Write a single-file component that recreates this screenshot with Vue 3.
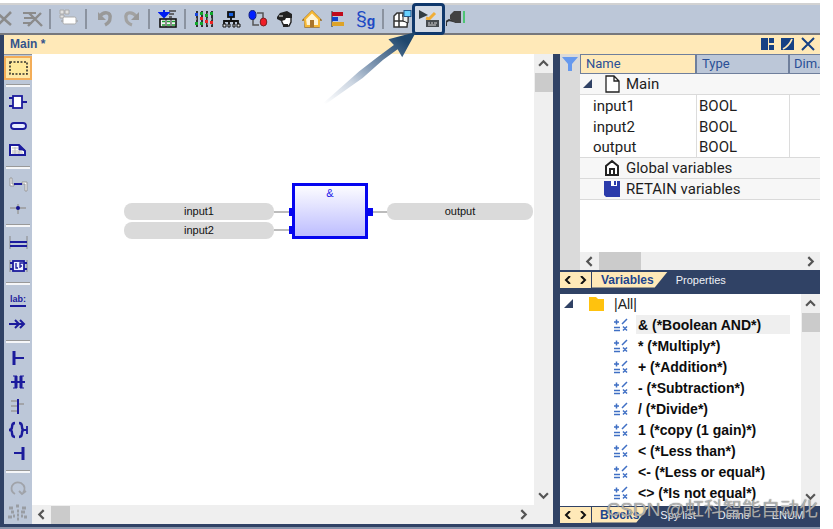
<script setup>
import { ref } from 'vue'

const variables = ref([
  { name: 'input1', type: 'BOOL' },
  { name: 'input2', type: 'BOOL' },
  { name: 'output', type: 'BOOL' },
])

const blocks = [
  '& (*Boolean AND*)',
  '* (*Multiply*)',
  '+ (*Addition*)',
  '- (*Subtraction*)',
  '/ (*Divide*)',
  '1 (*copy (1 gain)*)',
  '< (*Less than*)',
  '<- (*Less or equal*)',
  '<> (*Is not equal*)',
]
const selected = ref(0)
</script>

<template>
  <div class="ide">
    <header class="toolbar">
      <button class="tool" aria-label="Delete"><svg viewBox="0 0 20 20"><path d="M1 4 15 16M15 3 2 16" stroke="#8b8b8b" stroke-width="2.6" fill="none" /></svg></button>
      <button class="tool" aria-label="Clear rows"><svg viewBox="0 0 20 20"><path d="M0 4h13M1 9h11M0 14h9" stroke="#8b8b8b" stroke-width="1.8" /><path d="M6 4 19 17M18 4 5 17" stroke="#8b8b8b" stroke-width="2.4" /></svg></button>
      <i class="sep"></i>
      <button class="tool" aria-label="Insert block"><svg viewBox="0 0 20 20"><path d="M1 1h4v4H1zM6 1h4v4H6zM1 6h4v3H1z" fill="#e2e2e2" stroke="#aaa" /><path d="M2 12h17" stroke="#999" /><rect x="4" y="8" width="13" height="7" rx="1.5" fill="#fff" stroke="#ababab" /></svg></button>
      <i class="sep"></i>
      <button class="tool" aria-label="Undo"><svg viewBox="0 0 20 20"><path d="M5 7C9 2 16 3 15 9c0 4-3 6-5 7" fill="none" stroke="#999" stroke-width="3.400" /><path d="M3 3v8h8z" fill="#999" /></svg></button>
      <button class="tool" aria-label="Redo"><svg viewBox="0 0 20 20"><path d="M14 7C10 2 3 3 4 9c0 4 3 6 6 7" fill="none" stroke="#a2a2a2" stroke-width="3.200" /><path d="M17 3v8H9z" fill="#999" /></svg></button>
      <i class="sep"></i>
      <button class="tool" aria-label="Download"><svg viewBox="0 0 20 20"><path d="M6 1v6M2 4l4 4 4-4z" stroke="#001df0" stroke-width="2" fill="#001df0" /><path d="M11 2h7M11 5h5M11 8h3" stroke="#444" stroke-width="1.4" /><rect x="2" y="10" width="16" height="8" fill="#f4f4f4" stroke="#111" stroke-width="1.6" /><path d="M4 12.500h3M9 12.500h3M14 12.500h3M4 16h3M9 16h3M14 16h3" stroke="#1b9f2d" stroke-width="1.4" /><path d="M8 10v8M13 10v8" stroke="#222" /></svg></button>
      <i class="sep"></i>
      <button class="tool" aria-label="Monitoring"><svg viewBox="0 0 20 20"><path d="M3 2v16M8 2v16M13 2v16M18 2v16" stroke="#222" stroke-width="1.800" /><path d="M1 5h17M1 10h17M1 15h17" stroke="#bbb" stroke-dasharray="2 2" /><path d="M1 4h3v3H1z" fill="#1745df" /><path d="M6 3h3v3H6zM11 5h3v3h-3zM16 3h3v3h-3zM1 13h3v3H1zM6 13h3v3H6z" fill="#10a82b" /><path d="M6 8h3v3H6zM11 11h3v3h-3zM16 12h3v3h-3z" fill="#ec2424" /></svg></button>
      <button class="tool" aria-label="Network"><svg viewBox="0 0 20 20"><rect x="7" y="3" width="6" height="5" fill="#155fe2" stroke="#111" stroke-width="1.800" /><path d="M10 8v4M3 15v-3h14v3M8 12v3M13 12v3" fill="none" stroke="#111" stroke-width="1.800" /><path d="M2 15h3v3H2zM7 15h2v3H7zM12 15h2v3h-2zM16 15h3v3h-3z" fill="#ddd" stroke="#111" /></svg></button>
      <button class="tool" aria-label="Binding"><svg viewBox="0 0 20 20"><path d="M5 8v8h6M9 4h6v9" fill="none" stroke="#555" stroke-width="1.5" /><ellipse cx="4.500" cy="6" rx="3.500" ry="4.500" fill="#001eff" stroke="#102080" /><ellipse cx="15.500" cy="13" rx="3.300" ry="4" fill="#f01d27" stroke="#7b2020" /></svg></button>
      <button class="tool" aria-label="User"><svg viewBox="0 0 20 20"><path d="M6 8h10v5l-2 4H9l-2-4z" fill="#fff" stroke="#222" stroke-width="1.4" /><path d="M2 8 5 4l7-2 5 3v4h-6l-1 2-4 1-4-2zM8 15h5v3H8z" fill="#222" /><path d="M4 7h4M13 12h2" stroke="#eee" /></svg></button>
      <button class="tool" aria-label="Home"><svg viewBox="0 0 20 20"><path d="M1 11 10 2l9 9h-2v7H3v-7z" fill="#f7b733" stroke="#9a6c20" stroke-width="1.3" /><path d="m3 10 7-7 7 7v7H4z" fill="#fff4d5" stroke="#f6b936" stroke-width="2" /><path d="M8 11h4v7H8z" fill="#a9742a" /></svg></button>
      <button class="tool" aria-label="Chart"><svg viewBox="0 0 20 20"><path d="M3 2v16" stroke="#222" /><path d="M3 3h11v4H3z" fill="#c00b1b" /><path d="M3 8h6v4H3z" fill="#1245c9" /><path d="M3 13h12v4H3z" fill="#dda328" /></svg></button>
      <button class="tool paragraph" aria-label="Strings">§<b>g</b></button>
      <i class="sep"></i>
      <button class="tool" aria-label="Project grid"><svg viewBox="0 0 20 20"><path d="M2 7l3-3h6v3h5l-1 11H2zM2 12h13M7 4v14" fill="#fff" stroke="#333" stroke-width="1.500" /><path d="M11 6v6l5 2V8" fill="#eee" stroke="#222" /><rect x="12" y="1.500" width="7" height="6" fill="#68d1ff" stroke="#225588" /></svg></button>
      <button class="tool active" aria-label="Start simulation"><svg viewBox="0 0 20 20"><path d="m0 1 9 5-9 4z" fill="#333d42" /><path d="m7 9 3 1 6-6" fill="none" stroke="#f0ae37" stroke-width="3" /><path d="M7 11h13v7H7z" fill="#464b50" /><path d="M9 14h2M12 14h2M15 14h3M9 16h8" stroke="#d5d5d5" /></svg></button>
      <button class="tool" aria-label="Connect"><svg viewBox="0 0 20 20"><path d="M0 17v-4l3-2 4 1V9" fill="none" stroke="#333" stroke-width="2" /><path d="M4 6 8 2h7v12H9l-5-4z" fill="#424242" /><path d="M18 2v12" stroke="#2ac553" stroke-width="1.5" /></svg></button>
    </header>

    <div class="titlebar">
      <strong>Main *</strong>
      <span class="window-actions">
        <button aria-label="Tile"><svg viewBox="0 0 14 14"><path d="M0 1h7v12H0zM8 1h5v5H8zM8 8h5v5H8z" /></svg></button>
        <button aria-label="Restore"><svg viewBox="0 0 14 14"><path d="M0 1h13v12H0z" /><path d="M2 12Q8 9 11 2" stroke="#ffe9b8" stroke-width="1.800" fill="none" /></svg></button>
        <button aria-label="Close"><svg viewBox="0 0 14 14"><path d="m1 1 12 12M13 1 1 13" stroke="#164184" stroke-width="2" /></svg></button>
      </span>
    </div>

    <main class="workspace">
      <nav class="toolbox">
        <button class="chosen" aria-label="Select"><svg viewBox="0 0 22 20"><rect x="3" y="4" width="17" height="12" fill="#ffe99b" stroke="#33332d" stroke-width="1.6" stroke-dasharray="2 1.500" /></svg></button>
        <hr>
        <button aria-label="Block"><svg viewBox="0 0 22 20"><path d="M2 6h5M2 14h5M15 10h5" stroke-width="2" /><rect x="6" y="4" width="9" height="12" fill="#fff" stroke-width="1.800" /></svg></button>
        <button aria-label="Variable"><svg viewBox="0 0 22 20"><rect x="4" y="7" width="15" height="6" rx="3" fill="#e8edff" stroke-width="1.800" /></svg></button>
        <button aria-label="Comment"><svg viewBox="0 0 22 20"><path d="M3 5h9l6 6v4H3z" fill="#fff" stroke-width="2" /><path d="M12 5v5h6" fill="#1e1ea0" /><path d="M5 8h6M5 11h10M5 13h11M8 7v7M12 11v3" stroke="#bbb" stroke-width="1" /></svg></button>
        <hr>
        <button aria-label="Connection"><svg viewBox="0 0 22 20"><path d="M3 4v8h4v-2H5V4zM15 8v2h3v7h2V8z" fill="#fff" stroke="#999" stroke-width="1" /><path d="M7 10h8" stroke-width="2" /></svg></button>
        <button aria-label="Corner"><svg viewBox="0 0 22 20"><path d="M3 10h16M11 6v10" stroke="#999" stroke-width="1.4" /><circle cx="11" cy="10" r="2" fill="#151590" stroke="none" /></svg></button>
        <hr>
        <button aria-label="Rail"><svg viewBox="0 0 22 20"><path d="M3 4v13M20 4v13" stroke="#888" /><path d="M3 10h17M3 14h17" stroke-width="2" /></svg></button>
        <button aria-label="Function"><svg viewBox="0 0 22 20"><path d="M3 4v12M20 4v12" stroke="#888" /><path d="M3 7h3M3 13h3M17 7h3M17 13h3" stroke-width="2" /><rect x="6" y="5" width="11" height="10" fill="#edf0ff" stroke-width="1.800" /><path d="M9 7v5h2M13 12V7h3M13 10h2" stroke-width="1.300" /></svg></button>
        <hr>
        <button class="label-tool" aria-label="Label">lab:</button>
        <button aria-label="Jump"><svg viewBox="0 0 22 20"><path d="M2 10h15M8 6l4 4-4 4M13 6l4 4-4 4" stroke-width="2" /></svg></button>
        <hr>
        <button aria-label="Left rail"><svg viewBox="0 0 22 20"><path d="M7 3v14" stroke-width="3" /><path d="M7 10h10" stroke-width="2" /></svg></button>
        <button aria-label="Contact"><svg viewBox="0 0 22 20"><path d="M4 10h14" stroke-width="2" /><path d="M9 4v12M14 4v12" stroke-width="3" /><path d="M6 4h4M6 16h4M13 4h4M13 16h4" /></svg></button>
        <button aria-label="Branch"><svg viewBox="0 0 22 20"><path d="M4 5h6M4 10h6M4 15h6M11 8h6" stroke="#999" stroke-width="1.500" /><path d="M11 3v15" stroke-width="2" /></svg></button>
        <button aria-label="Coil"><svg viewBox="0 0 22 20"><path d="M8 3Q5 3 5 7q0 3-3 3 3 0 3 3 0 4 3 4M12 3q3 0 3 4 0 3 2 3-2 0-2 3 0 4-3 4" stroke-width="2.400" /><path d="M15 10h5M20 6v8" stroke-width="1.800" /></svg></button>
        <button aria-label="Right rail"><svg viewBox="0 0 22 20"><path d="M16 3v13" stroke-width="3" /><path d="M7 9h8" stroke-width="2" /></svg></button>
        <hr>
        <button aria-label="Rotate"><svg viewBox="0 0 22 20"><path d="M8 16Q3 13 5 8q3-5 9-3 6 4 2 10M12 13l3 3 4-3" stroke="#a0a3a9" stroke-width="1.800" /></svg></button>
        <button aria-label="Align"><svg viewBox="0 0 22 20"><path d="M2 6h4M9 4h3M15 6h4M4 10h3M10 9h2M14 10h4M1 15h4M6 14h2M10 13h2M10 17h2M14 14h2M17 15h3" stroke="#999da3" stroke-width="3" /></svg></button>
      </nav>

      <section class="editor" aria-label="Function block diagram">
        <div class="canvas">
          <i class="wire wire-a"></i><i class="wire wire-b"></i><i class="wire wire-c"></i>
          <div class="pin pin-a">input1</div>
          <div class="pin pin-b">input2</div>
          <div class="block">&amp;</div>
          <i class="port port-a"></i><i class="port port-b"></i><i class="port port-c"></i>
          <div class="pin pin-out">output</div>
        </div>
        <div class="vscroll">
          <svg viewBox="0 0 10 10"><path d="m1 7 4-4 4 4" /></svg>
          <i class="thumb"></i>
          <svg class="end" viewBox="0 0 10 10"><path d="m1 3 4 4 4-4" /></svg>
        </div>
        <div class="hscroll editor-h">
          <svg viewBox="0 0 10 10"><path d="M7 1 3 5l4 4" /></svg>
          <i class="thumb"></i>
          <svg class="end" viewBox="0 0 10 10"><path d="m3 1 4 4-4 4" /></svg>
        </div>
      </section>

      <aside class="side">
        <section class="variables">
          <div class="filter"><svg viewBox="0 0 16 16"><path d="M0 1h16l-6 7v7H6V8z" fill="#6699ee" /></svg></div>
          <div class="variables-body">
            <table>
              <colgroup><col class="c-name"><col class="c-type"><col></colgroup>
              <thead><tr><th>Name</th><th>Type</th><th>Dim.</th></tr></thead>
              <tbody>
                <tr class="group"><td colspan="3"><span class="cell"><svg class="arrow" viewBox="0 0 10 10"><path d="M9 0v9H0z" /></svg><svg class="glyph" viewBox="0 0 18 18"><path d="M3 1h8l5 5v11H3zM11 1v5h5" fill="#fff" stroke="#222" stroke-width="1.300" /></svg>Main</span></td></tr>
                <tr v-for="v in variables" :key="v.name" class="item"><td class="var">{{ v.name }}</td><td>{{ v.type }}</td><td></td></tr>
                <tr class="group"><td colspan="3"><span class="cell"><i class="arrow"></i><svg class="glyph" viewBox="0 0 18 18"><path d="M3 16V7l6-5 6 5v9zM7 16v-6h4v6" fill="#fff" stroke="#222" stroke-width="2" /></svg>Global variables</span></td></tr>
                <tr class="group"><td colspan="3"><span class="cell"><i class="arrow"></i><svg class="glyph" viewBox="0 0 18 18"><path d="M1 1h16v16H3l-2-2z" fill="#2b3bab" /><path d="M8 1h6v5H8z" fill="#fff" /><path d="M11 1h2v4h-2z" fill="#2b3bab" /></svg>RETAIN variables</span></td></tr>
              </tbody>
            </table>
            <div class="hscroll vars-h">
              <svg viewBox="0 0 10 10"><path d="M7 1 3 5l4 4" /></svg>
              <i class="thumb"></i>
              <svg class="end" viewBox="0 0 10 10"><path d="m3 1 4 4-4 4" /></svg>
            </div>
          </div>
        </section>

        <nav class="tabs">
          <span class="pager"><button aria-label="Previous tab"><svg viewBox="0 0 8 8"><path d="M6 0 2 4l4 4" /></svg></button><button aria-label="Next tab"><svg viewBox="0 0 8 8"><path d="m2 0 4 4-4 4" /></svg></button></span>
          <button class="tab current">Variables</button>
          <button class="tab">Properties</button>
        </nav>

        <section class="library">
          <div class="tree">
            <div class="root"><svg class="arrow" viewBox="0 0 10 10"><path d="M9 0v9H0z" /></svg><svg class="folder" viewBox="0 0 16 14"><path d="M1 0h7l2 2h6v12H1z" fill="#ffc20e" /></svg>|All|</div>
            <ul>
              <li v-for="(b, i) in blocks" :key="b">
                <svg viewBox="0 0 16 14"><path d="M1 4h5M3.500 1.500v5M1 9.500h6M1 12.500h6M9 6l5-5M10 8.500l4 4M14 8.500l-4 4" fill="none" stroke="#3f6fc4" stroke-width="1.500" /></svg>
                <button :class="{ picked: i === selected }" @click="selected = i">{{ b }}</button>
              </li>
            </ul>
          </div>
          <div class="vscroll">
            <svg viewBox="0 0 10 10"><path d="m1 7 4-4 4 4" /></svg>
            <i class="thumb"></i>
            <svg class="end" viewBox="0 0 10 10"><path d="m1 3 4 4 4-4" /></svg>
          </div>
        </section>

        <nav class="tabs lower">
          <span class="pager"><button aria-label="Previous tab"><svg viewBox="0 0 8 8"><path d="M6 0 2 4l4 4" /></svg></button><button aria-label="Next tab"><svg viewBox="0 0 8 8"><path d="m2 0 4 4-4 4" /></svg></button></span>
          <button class="tab current">Blocks</button>
          <button class="tab">Spy list</button>
          <button class="tab">Define</button>
          <button class="tab">ENUM</button>
        </nav>
        <div class="watermark">CSDN @虹科智能自动化</div>
      </aside>
    </main>
    <footer></footer>
  </div>
</template>

<style>
body { margin: 0; background: #fff; overflow: hidden; }
</style>

<style scoped>
* { box-sizing: border-box; }
button { border: 0; padding: 0; margin: 0; background: none; font: inherit; color: inherit; }
svg { display: block; flex: none; }

.ide {
  display: flex;
  flex-direction: column;
  height: 100vh;
  padding: 3px 13px 0 0;
  font-family: "Liberation Sans", "Noto Sans CJK SC", sans-serif;
}

.toolbar {
  display: flex;
  align-items: center;
  flex: none;
  height: 32px;
  padding-right: 8px;
  background: #bcc7d8;
  border-top: 2px solid #d2d2d2;
  border-bottom: 2px solid #77787c;
}
.tool { flex: none; width: 27px; height: 28px; display: grid; place-items: center; }
.tool:first-child { margin-left: -8px; }
.tool svg { width: 20px; height: 20px; }
.toolbar .sep { flex: none; width: 2px; height: 20px; margin: 0 4px 0 3px; background: #8b93a0; }
.active { outline: 3px solid #10386c; outline-offset: -1px; border-radius: 2px; background: #d3dae5; width: 29px; margin: 0 -1px; }
.tool.paragraph { display: flex; align-items: center; justify-content: center; color: #1c4ac4; font-size: 20px; line-height: 24px; }
.paragraph b { font-size: 14px; padding-top: 4px; }

.titlebar {
  display: flex;
  align-items: center;
  justify-content: space-between;
  flex: none;
  height: 19px;
  padding: 0 5px 2px 6px;
  border-left: 4px solid #304265;
  background: #ffe9b8;
}
.titlebar strong { font-size: 12px; line-height: 16px; color: #34548c; }
.window-actions { display: flex; gap: 6px; }
.window-actions svg { width: 14px; height: 14px; fill: #164184; }

.workspace { display: flex; flex: 1; min-height: 0; border-left: 4px solid #304265; }
footer { flex: none; height: 5px; background: #304265; border-bottom: 2px solid #8793aa; }

.toolbox {
  display: flex;
  flex-direction: column;
  justify-content: space-between;
  flex: none;
  width: 28px;
  padding-top: 1px;
  background: #bcc7d8;
  border-top: 1px solid #8a8f9a;
  overflow: hidden;
}
.toolbox button { flex: none; height: 24px; display: grid; place-items: center; }
.toolbox svg { width: 22px; height: 20px; fill: none; stroke: #1b1b9c; }
.toolbox hr { flex: none; width: 24px; height: 3px; margin: 4px auto 3px; border: 0; border-top: 1px solid #999; border-bottom: 2px solid #f5f6f8; }
.toolbox .chosen { background: #ffe8a6; border: 2px solid #f3ad58; }
.toolbox .label-tool { place-self: center; height: 14px; margin: 5px 0; font-size: 9px; line-height: 11px; font-weight: bold; color: #1b1b9c; border-bottom: 2px solid #1b1b9c; }

.editor { flex: 1; min-width: 0; display: grid; grid-template-columns: 1fr 19px; grid-template-rows: 1fr 19px; }
.canvas { position: relative; overflow: hidden; background: #fff; }
.pin { position: absolute; width: 150px; height: 17px; border-radius: 8px; background: #dadada; font-size: 11px; line-height: 16px; text-align: center; color: #111; }
.pin-a { left: 92px; top: 149px; }
.pin-b { left: 92px; top: 168px; }
.pin-out { left: 355px; top: 149px; width: 146px; }
.block { position: absolute; left: 260px; top: 129px; width: 76px; height: 56px; border: 3px solid #0505ef; background: linear-gradient(#fcfcff, #bdbdff); font-size: 11px; line-height: 14px; text-align: center; color: #2020e8; }
.wire { position: absolute; height: 2px; background: #bcbcbc; }
.wire-a { left: 242px; top: 157px; width: 16px; }
.wire-b { left: 242px; top: 175px; width: 16px; }
.wire-c { left: 340px; top: 157px; width: 16px; }
.port { position: absolute; width: 6px; height: 8px; background: #0505ef; }
.port-a { left: 257px; top: 154px; }
.port-b { left: 257px; top: 172px; }
.port-c { left: 335px; top: 154px; }

.vscroll, .hscroll { display: flex; align-items: center; background: #efefef; }
.vscroll { flex-direction: column; }
.vscroll svg, .hscroll svg { width: 11px; height: 11px; margin: 4px; fill: none; stroke: #555; stroke-width: 2; }
.thumb { background: #cbcbcb; }
.vscroll .thumb { width: 18px; height: 19px; }
.vscroll .end { margin-top: auto; }
.hscroll .thumb { height: 18px; width: 19px; }
.hscroll .end { margin-left: auto; }
.editor-h { grid-column: 1 / 3; padding-right: 20px; }

.side { position: relative; display: flex; flex-direction: column; flex: none; width: 267px; min-width: 0; border-left: 7px solid #304265; background: #304265; }
.variables { display: flex; flex: none; height: 216px; background: #fff; }
.filter { flex: none; width: 20px; padding: 2px; background: #dadada; }
.filter svg { width: 16px; height: 16px; }
.variables-body { flex: 1; min-width: 0; display: flex; flex-direction: column; }
table { width: 100%; table-layout: fixed; border-collapse: separate; border-spacing: 0; font-family: Roboto, sans-serif; font-size: 15px; color: #1d1d1d; }
.c-name { width: 117px; }
.c-type { width: 93px; }
th { height: 20px; padding: 0 0 0 5px; border: 1px solid #6f7f9c; border-width: 1px 2px 1px 0; background: #bcc7d8; text-align: left; font-weight: normal; font-size: 13px; line-height: 18px; color: #2a4f96; white-space: nowrap; }
th:first-child { background: #ffe9b8; border-left-width: 1px; }
th:last-child { border-right: 0; padding-left: 4px; }
td { height: 21px; padding: 0 0 0 2px; border-right: 1px solid #dcdcdc; line-height: 20px; white-space: nowrap; }
td:last-child { border-right: 0; }
td.var { padding-left: 13px; }
.item:nth-child(4) td { border-bottom: 1px solid #dadada; }
.group td { background: #f7f7f7; border-bottom: 1px solid #dadada; border-right: 0; }
.cell { display: flex; align-items: center; height: 20px; }
.arrow { width: 10px; height: 10px; fill: #304265; }
.cell .arrow { margin-left: 1px; }
.glyph { width: 18px; height: 18px; margin: 0 5px 0 10px; }
.vars-h { flex: none; height: 18px; margin-top: auto; }
.vars-h .thumb { width: 42px; }

.tabs { display: flex; align-items: center; flex: none; height: 24px; padding: 1px 0 6px; font-size: 11px; line-height: 14px; color: #eef1f7; white-space: nowrap; }
.pager { display: flex; flex: none; width: 31px; height: 16px; background: #ffe9b8; }
.pager button { flex: 1; display: grid; place-items: center; }
.pager svg { width: 8px; height: 8px; fill: none; stroke: #111; stroke-width: 2; }
.tab { flex: none; height: 16px; padding: 0 8px; }
.current { margin-left: 1px; padding: 0 14px 0 9px; background: #ffe9b8; color: #1d458d; font-size: 12px; font-weight: bold; clip-path: polygon(0 0, 100% 0, calc(100% - 13px) 100%, 0 100%); }

.library { flex: 1; min-height: 0; display: flex; background: #fff; }
.tree { flex: 1; min-width: 0; overflow: hidden; }
.root { display: flex; align-items: center; height: 20px; padding-left: 4px; font-size: 14px; color: #222; }
.folder { width: 16px; height: 14px; margin: 0 10px 0 14px; }
ul { list-style: none; margin: 0; padding: 0; }
li { display: flex; align-items: center; height: 21px; padding: 0 11px 0 53px; }
li svg { width: 16px; height: 14px; margin-right: 7px; }
li button { flex: 1; height: 19px; padding-left: 2px; text-align: left; font-size: 14px; font-weight: bold; line-height: 18px; color: #0d0d0d; white-space: nowrap; }
.picked { background: #efefef; }

.lower { height: 18px; padding: 0 0 1px; }
.lower .tab { padding: 0 11px; }
.lower .current { padding: 0 10px 0 8px; }
.watermark { position: absolute; right: 2px; bottom: 2px; font-size: 19px; line-height: 24px; color: rgba(215, 215, 215, 0.7); text-shadow: 0 0 1px #444; white-space: nowrap; }

.ide::after {
  content: "";
  position: absolute;
  left: 324px;
  top: 32px;
  width: 92px;
  height: 72px;
  background: linear-gradient(218deg, #1f476d 12%, #8299b4 48%, rgba(170, 186, 206, 0.6) 70%, rgba(200, 210, 225, 0) 100%);
  clip-path: polygon(100% 0, 85% 35%, 80% 24%, 64% 39%, 42% 64%, 2% 100%, 0 98%, 38% 55%, 58% 35%, 76% 18%, 70% 10%);
}
</style>
